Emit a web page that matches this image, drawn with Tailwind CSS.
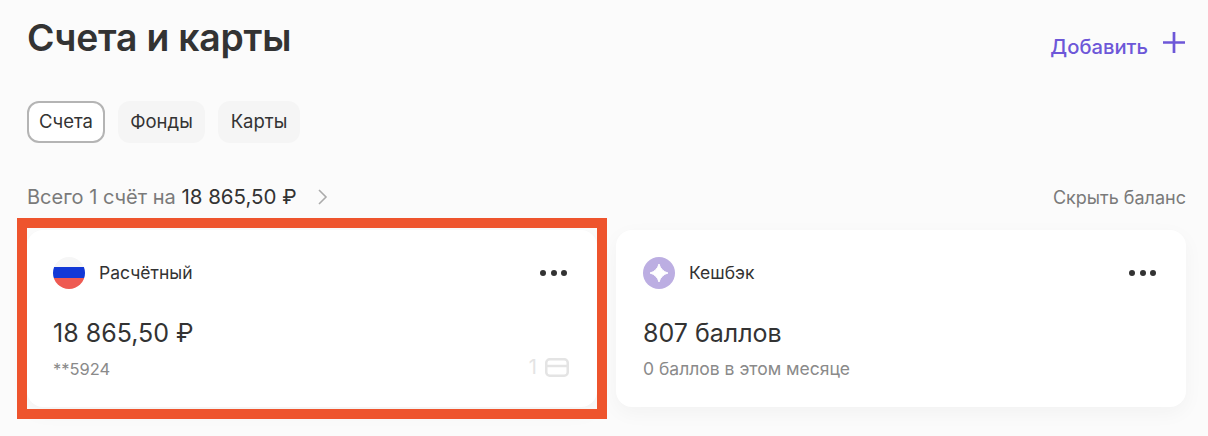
<!DOCTYPE html>
<html lang="ru">
<head>
    <meta charset="UTF-8">
    <title>Счета и карты</title>
    <script src="https://cdn.jsdelivr.net/npm/@tailwindcss/browser@4"></script>
</head>
<body class="bg-[#fbfbfb] font-['Inter',sans-serif] text-[#333333] h-[436px] overflow-hidden">
    <div class="relative pl-[27px] pr-[22px]">
        <div class="flex justify-between pt-[15px] h-[101px]">
            <h1 class="text-[37.3px] leading-[46px] font-semibold tracking-[-0.2px]">Счета и карты</h1>
            <div class="flex items-start gap-[14px] pt-[15px] text-[#6d57d8]">
                <span class="text-[20.200px] leading-[34px] font-medium">Добавить</span>
                <svg class="w-[24px] h-[24px] mt-[1px]" viewBox="0 0 24 24" fill="none" stroke="currentColor" stroke-width="2.700"><path d="M12 1v21M1 11.500h22"/></svg>
            </div>
        </div>
        <div class="flex gap-[13px] h-[83px]">
            <button class="w-[78px] h-[42px] rounded-[12px] border-2 border-[#b4b4b4] bg-white text-[18.500px]">Счета</button>
            <button class="w-[87px] h-[42px] rounded-[12px] bg-[#f5f5f5] text-[18.500px]">Фонды</button>
            <button class="w-[82px] h-[42px] rounded-[12px] bg-[#f5f5f5] text-[18.500px]">Карты</button>
        </div>
        <div class="flex justify-between items-center h-[26px] text-[20px]">
            <div class="flex items-center text-[#7a7a7a]">
                <span>Всего 1 счёт на&nbsp;</span><span class="text-[20.500px] text-[#333333]">18 865,50 ₽</span>
                <svg class="w-[12px] h-[18px] ml-[20px]" viewBox="0 0 12 18" fill="none" stroke="#ababab" stroke-width="1.600"><path d="M2 2l7 7-7 7"/></svg>
            </div>
            <span class="text-[#7a7a7a] text-[18px]">Скрыть баланс</span>
        </div>
        <div class="grid grid-cols-2 gap-[19px] mt-[20px]">
            <div class="h-[177px] rounded-[16px] bg-white shadow-[0_6px_20px_rgba(0,0,0,0.04)] px-[26px] pt-[27px]">
                <div class="flex items-center justify-between h-[32px]">
                    <div class="flex items-center gap-[14px]">
                        <div class="w-[32px] h-[32px] rounded-full overflow-hidden flex flex-col">
                            <div class="h-[10px] bg-[#f6f6f6]"></div>
                            <div class="h-[11px] bg-[#1238d6]"></div>
                            <div class="h-[11px] bg-[#ee5a52]"></div>
                        </div>
                        <span class="text-[17.500px]">Расчётный</span>
                    </div>
                    <div class="flex gap-[4.500px] mr-[4px]">
                        <span class="w-[6px] h-[6px] rounded-full bg-[#333333]"></span>
                        <span class="w-[6px] h-[6px] rounded-full bg-[#333333]"></span>
                        <span class="w-[6px] h-[6px] rounded-full bg-[#333333]"></span>
                    </div>
                </div>
                <div class="text-[25px] leading-[30px] mt-[29px]">18 865,50 ₽</div>
                <div class="flex items-center justify-between mt-[9px] h-[24px]">
                    <span class="text-[16.500px] text-[#8a8a8a]">**5924</span>
                    <div class="flex items-center gap-[8px] mr-[2px] mb-[4px] text-[#e4e4e4] text-[20px]">
                        <span>1</span>
                        <svg class="w-[24px] h-[19px]" viewBox="0 0 24 19" fill="none" stroke="currentColor" stroke-width="2.500"><rect x="1.250" y="1.250" width="21.500" height="16.500" rx="3.500"/><path d="M1 8h22"/></svg>
                    </div>
                </div>
            </div>
            <div class="h-[177px] rounded-[16px] bg-white shadow-[0_6px_20px_rgba(0,0,0,0.04)] px-[27px] pt-[27px]">
                <div class="flex items-center justify-between h-[32px]">
                    <div class="flex items-center gap-[14px]">
                        <div class="w-[32px] h-[32px] rounded-full bg-[#bcaee2] flex items-center justify-center">
                            <svg class="w-[22px] h-[22px]" viewBox="0 0 22 22" fill="#ffffff" stroke="#ffffff" stroke-width="1" stroke-linejoin="round"><path d="M11 2Q13 9 20 11 13 13 11 20 9 13 2 11 9 9 11 2Z"/></svg>
                        </div>
                        <span class="text-[17.500px]">Кешбэк</span>
                    </div>
                    <div class="flex gap-[4.500px] mr-[3px]">
                        <span class="w-[6px] h-[6px] rounded-full bg-[#333333]"></span>
                        <span class="w-[6px] h-[6px] rounded-full bg-[#333333]"></span>
                        <span class="w-[6px] h-[6px] rounded-full bg-[#333333]"></span>
                    </div>
                </div>
                <div class="text-[25px] leading-[30px] mt-[29px]">807 баллов</div>
                <div class="text-[17.500px] leading-[24px] text-[#8a8a8a] mt-[9px]">0 баллов в этом месяце</div>
            </div>
        </div>
        <div class="absolute left-[17px] top-[218px] w-[590px] h-[201px] border-[10px] border-[#ee542d]"></div>
    </div>
</body>
</html>
